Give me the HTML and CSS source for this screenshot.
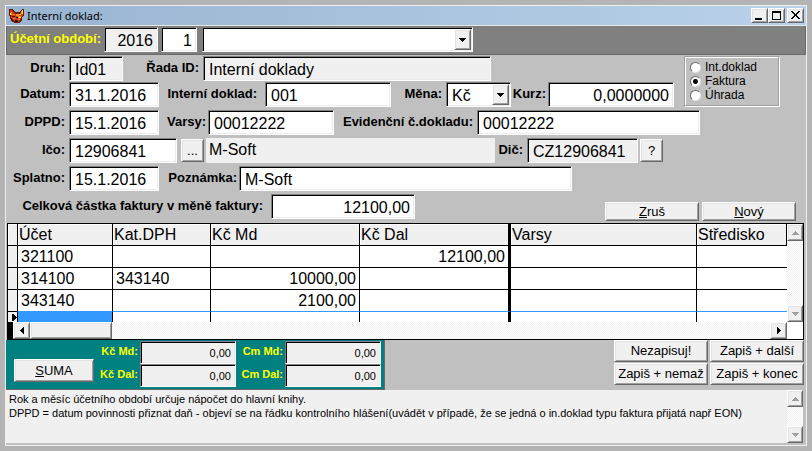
FILE: index.html
```html
<!DOCTYPE html>
<html lang="cs">
<head>
<meta charset="utf-8">
<title>Interní doklad</title>
<link rel="stylesheet" href="styles.css">
</head>
<body>
<main class="window">
  <header class="titlebar">
    <svg class="fox" width="16" height="16" viewBox="0 0 16 16" shape-rendering="crispEdges" aria-hidden="true">
      <path fill="#6a1a00" d="M0 1h3l3 3h4l3-3h2v6l-2 3v3l-3 2H6l-4-2-1-4-1-3z"/>
      <path fill="#d83c1c" d="M1 2h2l3 4h5l2-3h1v4l-2 3-1 3-3 1H6l-3-3-1-3z"/>
      <path fill="#f4901c" d="M2 4h1v3H2zM4 6h2v1H4zM7 6h3v2H7zM12 3h1v3h-1zM9 8h3v2H9zM4 10h2v1H4zM9 11h2v1H9z"/>
      <path fill="#ffe640" d="M13 2h1v4h-1zM10 6h2v1h-2zM10 9h2v1h-2zM1 5h1v2H1z"/>
      <path fill="#2a1408" d="M3 8h3v1H3zM7 9h2v1H7zM6 12h3v2H6zM2 10h1v2H2zM10 4h1v2h-1z"/>
    </svg>
    <h1>Interní doklad:</h1>
    <div class="controls">
      <button type="button" class="raised" aria-label="Minimalizovat"><svg width="11" height="11" viewBox="0 0 11 11" shape-rendering="crispEdges"><path d="M1 8h7v2H1z"/></svg></button>
      <button type="button" class="raised" aria-label="Maximalizovat"><svg width="11" height="11" viewBox="0 0 11 11" shape-rendering="crispEdges"><path fill-rule="evenodd" d="M1 1h9v9H1zM2 3v6h7V3z"/></svg></button>
      <button type="button" class="raised close" aria-label="Zavřít"><svg width="11" height="11" viewBox="0 0 11 11" shape-rendering="crispEdges"><path d="M1 1h2v1h1v1h1v1h1V3h1V2h1V1h2v1H9v1H8v1H7v2h1v1h1v1h1v1H8V8H7V7H6V6H5v1H4v1H3v1H1V8h1V7h1V6h1V4H3V3H2V2H1z"/></svg></button>
    </div>
  </header>

  <form>
    <section class="period">
      <label for="year">Účetní období:</label>
      <input id="year" class="field readonly num" value="2016" readonly>
      <input class="field num" aria-label="Měsíc" value="1">
      <div class="combo">
        <select class="field" aria-label="Období"><option></option></select>
        <span class="raised drop"><svg width="7" height="4" viewBox="0 0 7 4" shape-rendering="crispEdges"><path d="M0 0h7v1H6v1H5v1H4v1H3V3H2V2H1V1H0z"/></svg></span>
      </div>
    </section>

    <section class="details">
      <div class="top">
        <div class="rows">
          <div class="row row-kind">
            <label for="kind">Druh:</label><input id="kind" class="field readonly" value="Id01" readonly>
            <label for="series">Řada ID:</label><input id="series" class="field readonly" value="Interní doklady" readonly>
          </div>
          <div class="row row-date">
            <label for="date">Datum:</label><input id="date" class="field" value="31.1.2016">
            <label for="doc" class="loose">Interní doklad:</label><input id="doc" class="field" value="001">
            <label for="cur">Měna:</label>
            <div class="combo">
              <select id="cur" class="field"><option>Kč</option></select>
              <span class="raised drop"><svg width="7" height="4" viewBox="0 0 7 4" shape-rendering="crispEdges"><path d="M0 0h7v1H6v1H5v1H4v1H3V3H2V2H1V1H0z"/></svg></span>
            </div>
            <label for="rate" class="tight">Kurz:</label><input id="rate" class="field num" value="0,0000000">
          </div>
        </div>
        <fieldset class="types">
          <label><input type="radio" name="type">Int.doklad</label>
          <label><input type="radio" name="type" checked>Faktura</label>
          <label><input type="radio" name="type">Úhrada</label>
        </fieldset>
      </div>
      <div class="row row-dppd">
        <label for="dppd">DPPD:</label><input id="dppd" class="field" value="15.1.2016">
        <label for="varsy" class="tight">Varsy:</label><input id="varsy" class="field" value="00012222">
        <label for="evid">Evidenční č.dokladu:</label><input id="evid" class="field" value="00012222">
      </div>
      <div class="row row-ico">
        <label for="ico">Ičo:</label><input id="ico" class="field" value="12906841">
        <button type="button" class="raised small">...</button>
        <output class="flat">M-Soft</output>
        <label for="dic">Dič:</label><input id="dic" class="field readonly" value="CZ12906841" readonly>
        <button type="button" class="raised small">?</button>
      </div>
      <div class="row row-due">
        <label for="due">Splatno:</label><input id="due" class="field" value="15.1.2016">
        <label for="note" class="tight">Poznámka:</label><input id="note" class="field" value="M-Soft">
      </div>
      <div class="row row-total">
        <label for="total" class="loose">Celková částka faktury v měně faktury:</label><input id="total" class="field num" value="12100,00">
        <div class="actions">
          <button type="button" class="raised"><u>Z</u>ruš</button>
          <button type="button" class="raised"><u>N</u>ový</button>
        </div>
      </div>
    </section>

    <section class="grid">
      <table>
        <colgroup><col class="c-mark"><col class="c-acc"><col class="c-cat"><col class="c-md"><col class="c-dal"><col class="c-var"><col></colgroup>
        <thead>
          <tr><th></th><th>Účet</th><th>Kat.DPH</th><th>Kč Md</th><th class="split">Kč Dal</th><th>Varsy</th><th>Středisko</th></tr>
        </thead>
        <tbody>
          <tr><td></td><td>321100</td><td></td><td></td><td class="split num">12100,00</td><td></td><td></td></tr>
          <tr><td></td><td>314100</td><td>343140</td><td class="num">10000,00</td><td class="split"></td><td></td><td></td></tr>
          <tr class="before-current"><td></td><td>343140</td><td></td><td class="num">2100,00</td><td class="split"></td><td></td><td></td></tr>
          <tr class="current"><td><svg width="5" height="7" viewBox="0 0 5 7" shape-rendering="crispEdges"><path d="M0 0h2v1h1v1h1v1h1v1H4v1H3v1H2v1H0z"/></svg></td><td class="selected"></td><td></td><td></td><td class="split"></td><td></td><td></td></tr>
        </tbody>
      </table>
      <div class="vscroll">
        <button type="button" class="raised" aria-label="Nahoru"><svg width="7" height="4" viewBox="0 0 7 4" shape-rendering="crispEdges"><path d="M3 0h1v1h1v1h1v1h1v1H0V3h1V2h1V1h1z"/></svg></button>
        <button type="button" class="raised" aria-label="Dolů"><svg width="7" height="4" viewBox="0 0 7 4" shape-rendering="crispEdges"><path d="M0 0h7v1H6v1H5v1H4v1H3V3H2V2H1V1H0z"/></svg></button>
      </div>
      <div class="hscroll">
        <button type="button" class="raised" aria-label="Vlevo"><svg width="4" height="7" viewBox="0 0 4 7" shape-rendering="crispEdges"><path d="M3 0h1v7H3V6H2V5H1V4H0V3h1V2h1V1h1z"/></svg></button>
        <div class="raised thumb"></div>
        <button type="button" class="raised last" aria-label="Vpravo"><svg width="4" height="7" viewBox="0 0 4 7" shape-rendering="crispEdges"><path d="M0 0h1v1h1v1h1v1h1v1H3v1H2v1H1v1H0z"/></svg></button>
      </div>
      <div class="corner"></div>
    </section>

    <section class="summary">
      <div class="sums">
        <button type="button" class="raised suma"><u>S</u>UMA</button>
        <label for="s1">Kč Md:</label><input id="s1" class="field readonly num" value="0,00" readonly>
        <label for="s2">Cm Md:</label><input id="s2" class="field readonly num" value="0,00" readonly>
        <label for="s3">Kč Dal:</label><input id="s3" class="field readonly num" value="0,00" readonly>
        <label for="s4">Cm Dal:</label><input id="s4" class="field readonly num" value="0,00" readonly>
      </div>
      <div class="save">
        <button type="button" class="raised">Nezapisuj!</button>
        <button type="button" class="raised">Zapiš + další</button>
        <button type="button" class="raised">Zapiš + nemaž</button>
        <button type="button" class="raised">Zapiš + konec</button>
      </div>
    </section>

    <section class="help">
      <p>Rok a měsíc účetního období určuje nápočet do hlavní knihy.<br>DPPD = datum povinnosti přiznat daň - objeví se na řádku kontrolního hlášení(uvádět v případě, že se jedná o in.doklad typu faktura přijatá např EON)</p>
      <div class="vscroll">
        <button type="button" class="raised" aria-label="Nahoru"><svg width="7" height="4" viewBox="0 0 7 4" shape-rendering="crispEdges"><path d="M3 0h1v1h1v1h1v1h1v1H0V3h1V2h1V1h1z"/></svg></button>
        <button type="button" class="raised" aria-label="Dolů"><svg width="7" height="4" viewBox="0 0 7 4" shape-rendering="crispEdges"><path d="M0 0h7v1H6v1H5v1H4v1H3V3H2V2H1V1H0z"/></svg></button>
      </div>
    </section>
  </form>
</main>
</body>
</html>
```
FILE: styles.css
```css
* { box-sizing: border-box; }

body {
  margin: 0;
  padding: 5px;
  background: #b4b4b4;
  color: #000;
  font: 16px/20px "Liberation Sans", Arial, sans-serif;
}

.window {
  border: 1px solid #f0f0f0;
  background: #c0c0c0;
}

button, input, select { font: inherit; color: inherit; margin: 0; }

.raised {
  display: flex;
  align-items: center;
  justify-content: center;
  padding: 0;
  background: #f0f0f0;
  border: 1px solid;
  border-color: #fff #696969 #696969 #fff;
  border-radius: 0;
  box-shadow: inset 1px 1px 0 #e3e3e3, inset -1px -1px 0 #a0a0a0;
  font-size: 13px;
  line-height: 16px;
  white-space: pre;
}

.field {
  width: 100%;
  min-width: 0;
  height: 25px;
  padding: 2px 4px 0 5px;
  background: #fff;
  border: 1px solid;
  border-color: #808080 #fff #fff #808080;
  border-radius: 0;
  box-shadow: inset 1px 1px 0 #000, inset -1px -1px 0 #ececec;
  appearance: none;
  outline: 0;
}
.readonly, .flat { background: #f0f0f0; }
.num { text-align: right; }

/* Title bar */
.titlebar {
  display: flex;
  align-items: center;
  height: 20px;
  padding: 0 2px 0 3px;
  background: linear-gradient(90deg, #99b4d1, #b9d1ea);
  border-bottom: 1px solid #e8e8e8;
}
.titlebar h1 {
  flex: 1;
  margin: 0 0 0 2px;
  font: 11px/18px "Noto Sans", "Open Sans", sans-serif;
}
.controls { display: flex; }
.controls .raised { width: 17px; height: 15px; }
.controls .close { margin-left: 2px; }

/* Accounting period */
.period {
  display: grid;
  grid-template-columns: 94px 54px 36px 273px;
  column-gap: 3px;
  padding: 1px 0 2px;
  background: #808080;
  border: 1px solid #696969;
  border-top: 0;
}
.period .combo { margin-left: 2px; }
.period label { color: #ff0; }

label { font-weight: bold; font-size: 13px; line-height: 16px; white-space: nowrap; }
.period label, .row > label {
  padding: 4px 4px 0 0;
  text-align: right;
}
.period label { padding-right: 0; }

.combo { position: relative; }
.drop {
  position: absolute;
  top: 2px;
  right: 2px;
  bottom: 2px;
  width: 17px;
  pointer-events: none;
}

/* Document details */
.details { display: grid; row-gap: 3px; padding-top: 1px; }
.top { display: flex; gap: 10px; }
.rows { display: grid; row-gap: 1px; }
.row { display: grid; }
.row > .tight { padding-right: 2px; }
.row > .loose { padding-right: 8px; }
.row-kind { grid-template-columns: 63px 54px 80px 288px; }
.row-date { grid-template-columns: 63px 90px 106px 126px 55px 65px 37px 126px; }
.row-dppd { grid-template-columns: 63px 90px 49px 126px 143px 223px; }
.row-ico { grid-template-columns: 63px 108px 27px 291px 32px 111px 25px; }
.row-due { grid-template-columns: 63px 90px 80px 333px; }
.row-total { grid-template-columns: 265px 144px 1fr; }

.small { width: 23px; height: 23px; justify-self: end; align-self: center; }
.flat { margin-left: 2px; padding: 2px 3px; }

.types {
  display: grid;
  align-content: center;
  width: 95px;
  height: 50px;
  margin: 0;
  padding: 0 0 0 5px;
  border: 1px solid #a0a0a0;
  box-shadow: inset 1px 1px 0 #fff, 1px 1px 0 #fff;
}
.types label {
  display: flex;
  align-items: center;
  gap: 4px;
  font-weight: normal;
  font-size: 12px;
  line-height: 14px;
}
.types input {
  width: 11px;
  height: 11px;
  appearance: none;
  background: #fff;
  border: 1px solid;
  border-color: #696969 #e3e3e3 #e3e3e3 #696969;
  border-radius: 50%;
}
.types input:checked { background: radial-gradient(circle, #000 2px, #fff 3px); }

.actions {
  display: flex;
  justify-content: flex-end;
  align-items: flex-end;
  gap: 3px;
  margin-bottom: -2px;
  padding-right: 10px;
}
.actions .raised { width: 94px; height: 19px; }

/* Entries */
.grid {
  display: grid;
  grid-template-columns: 1fr 16px;
  margin: 4px 2px 0 1px;
  border: 1px solid #000;
  background: #fff;
}
table { width: 100%; table-layout: fixed; border-spacing: 0; }
.c-mark { width: 10px; }
.c-acc { width: 95px; }
.c-cat { width: 98px; }
.c-md { width: 149px; }
.c-dal { width: 151px; }
.c-var { width: 186px; }
th, td {
  height: 22px;
  padding: 0 3px;
  border: solid #000;
  border-width: 0 1px 1px 0;
  line-height: 20px;
  text-align: left;
  white-space: nowrap;
}
th { padding: 0 1px; background: #f0f0f0; font-weight: normal; box-shadow: inset 1px 1px 0 #fff; }
td.num { text-align: right; }
th.split, td.split { border-right-width: 3px; }
td:first-child { background: #f0f0f0; padding: 0; }
td:last-child { border-right: 0; }
.before-current td { border-bottom-color: #39f; }
.before-current td:first-child { border-bottom-color: #000; }
.current td { height: 10px; border-bottom: 0; line-height: 0; }
.current td:first-child { padding-left: 4px; }
td.selected { background: #39f; }

.vscroll, .hscroll {
  display: flex;
  background: repeating-conic-gradient(#f0f0f0 0 25%, #fff 0 50%) 0 0 / 2px 2px;
}
.vscroll { flex-direction: column; justify-content: space-between; }
.vscroll .raised { width: 16px; height: 17px; }
.vscroll svg { fill: #a0a0a0; }
.hscroll { height: 17px; border-left: 5px solid #000; }
.hscroll .raised { width: 17px; height: 17px; }
.hscroll .thumb { width: 82px; }
.hscroll .last { margin-left: auto; }

/* Totals */
.summary { display: flex; justify-content: space-between; align-items: flex-start; padding-right: 2px; }
.sums {
  display: grid;
  grid-template-columns: 80px 46px 96px 49px 96px;
  grid-auto-rows: 23px;
  padding: 1px 3px 2px 8px;
  background: #008080;
  border: solid #696969;
  border-width: 0 1px 1px 0;
}
.sums label { padding: 2px 2px 0 0; color: #ff0; font-size: 11px; text-align: right; }
.sums .field { height: 23px; padding-top: 0; font-size: 11px; }
.suma { grid-row: span 2; align-self: end; height: 23px; margin-bottom: 5px; }
.save { display: grid; grid-template-columns: 94px 94px; grid-auto-rows: 22px; gap: 1px 2px; }

/* Help text */
.help { display: flex; height: 53px; margin: 0 3px 2px 0; background: #f0f0f0; }
.help p { flex: 1; margin: 0; padding: 2px 3px; font-size: 11px; line-height: 14px; }
```
